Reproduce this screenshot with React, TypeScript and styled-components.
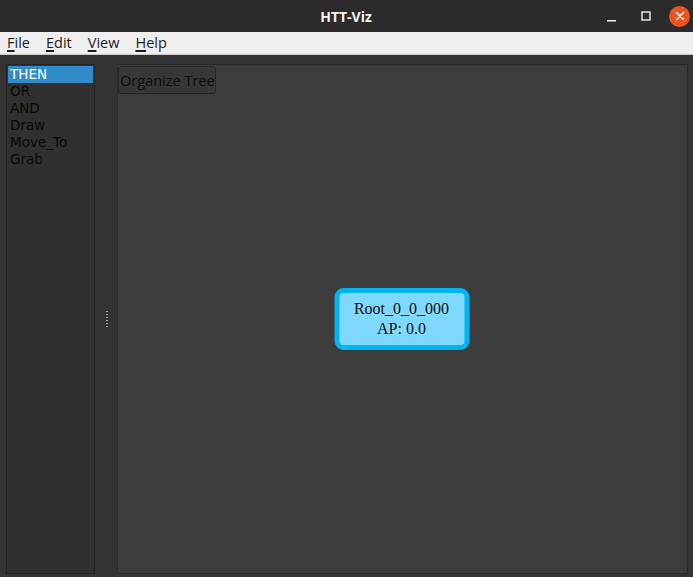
import React from "react";
import styled, { createGlobalStyle } from "styled-components";

const Global = createGlobalStyle`
  html, body { margin: 0; padding: 0; background: #333333; }
  #root { width: 693px; height: 577px; overflow: hidden; }
`;

const Window = styled.div`
  width: 693px;
  height: 577px;
  display: flex;
  flex-direction: column;
  background: #333333;
  font-family: "Open Sans", "DejaVu Sans", sans-serif;
`;

const TitleBar = styled.div`
  height: 32px;
  flex: none;
  background: #2c2a2a;
  display: flex;
  align-items: center;
  justify-content: center;
  position: relative;
`;

const Title = styled.div`
  color: #f2f2f2;
  font-weight: 700;
  font-size: 14px;
  margin-left: -1px;
`;

const WinControls = styled.div`
  position: absolute;
  right: 3px;
  top: 0;
  height: 32px;
  display: flex;
  align-items: center;
`;

const WinBtn = styled.div`
  width: 34px;
  height: 32px;
  display: flex;
  align-items: center;
  justify-content: center;
`;

const CloseBtn = styled.div`
  width: 21px;
  height: 21px;
  border-radius: 50%;
  background: #e95420;
  display: flex;
  align-items: center;
  justify-content: center;
  margin-left: 6px;
`;

const MenuBar = styled.div`
  height: 22px;
  flex: none;
  background: #efefef;
  border-bottom: 1px solid #c8c8c8;
  display: flex;
  align-items: center;
  padding-left: 7px;
`;

const MenuItem = styled.div`
  font-size: 14.5px;
  color: #1c1c1c;
  margin-right: 16px;
  line-height: 20px;
  u { text-decoration-thickness: 2px; text-underline-offset: 2px; }
`;

const Main = styled.div`
  flex: 1;
  display: flex;
  padding: 9px 5px 3px 6px;
  min-height: 0;
`;

const ListPanel = styled.div`
  width: 85px;
  flex: none;
  background: #303030;
  border: 1px solid #242424;
  padding: 1px;
  display: flex;
  flex-direction: column;
`;

const ListItem = styled.div<{ $selected?: boolean }>`
  height: 17px;
  line-height: 17px;
  font-family: "DejaVu Sans", sans-serif;
  font-size: 13.5px;
  padding-left: 2px;
  color: ${(p) => (p.$selected ? "#ffffff" : "#080808")};
  background: ${(p) => (p.$selected ? "#308cc6" : "transparent")};
`;

const Splitter = styled.div`
  width: 22px;
  flex: none;
  display: flex;
  align-items: center;
  justify-content: center;
`;

const Grip = styled.div`
  width: 2px;
  height: 16px;
  margin-left: 1px;
  background: repeating-linear-gradient(
    to bottom,
    #a0a0a0 0px,
    #a0a0a0 1px,
    transparent 1px,
    transparent 3px
  );
`;

const Canvas = styled.div`
  flex: 1;
  position: relative;
  background: #3c3c3c;
  border: 1px solid #2a2a2a;
  padding: 1px 0 0 0;
`;

const ToolButton = styled.button`
  height: 28px;
  padding: 0 1px;
  width: 98px;
  background: #373737;
  border: 1px solid #262626;
  border-radius: 3px;
  color: #0c0c0c;
  font-family: "Open Sans", "DejaVu Sans", sans-serif;
  font-size: 14.5px;
  white-space: nowrap;
  margin: 0;
`;

const Node = styled.div`
  position: absolute;
  left: 50%;
  top: 50%;
  transform: translate(-50%, -50%);
  width: 125px;
  height: 52px;
  background: #7fd9ff;
  border: 5px solid #00b4ef;
  border-radius: 9px;
  display: flex;
  flex-direction: column;
  align-items: center;
  justify-content: center;
  font-family: "Liberation Serif", "Times New Roman", serif;
  font-size: 16px;
  line-height: 20px;
  color: #111111;
  margin-left: -1px;
`;

const items = ["THEN", "OR", "AND", "Draw", "Move_To", "Grab"];

export default function App() {
  return (
    <>
      <Global />
      <Window>
        <TitleBar>
          <Title>HTT-Viz</Title>
          <WinControls>
            <WinBtn>
              <svg width="12" height="12" viewBox="0 0 12 12">
                <rect x="1" y="10" width="9" height="1.5" fill="#f2f2f2" />
              </svg>
            </WinBtn>
            <WinBtn>
              <svg width="12" height="12" viewBox="0 0 12 12">
                <rect x="2" y="2" width="8" height="8" fill="none" stroke="#f2f2f2" strokeWidth="1.4" />
              </svg>
            </WinBtn>
            <CloseBtn>
              <svg width="10" height="10" viewBox="0 0 10 10">
                <path d="M1.5 1.5 L8.5 8.5 M8.5 1.5 L1.5 8.5" stroke="#ffffff" strokeWidth="1.5" strokeLinecap="round" />
              </svg>
            </CloseBtn>
          </WinControls>
        </TitleBar>
        <MenuBar>
          <MenuItem><u>F</u>ile</MenuItem>
          <MenuItem><u>E</u>dit</MenuItem>
          <MenuItem><u>V</u>iew</MenuItem>
          <MenuItem><u>H</u>elp</MenuItem>
        </MenuBar>
        <Main>
          <ListPanel>
            {items.map((it, i) => (
              <ListItem key={it} $selected={i === 0}>{it}</ListItem>
            ))}
          </ListPanel>
          <Splitter>
            <Grip />
          </Splitter>
          <Canvas>
            <ToolButton>Organize Tree</ToolButton>
            <Node>
              <div>Root_0_0_000</div>
              <div>AP: 0.0</div>
            </Node>
          </Canvas>
        </Main>
      </Window>
    </>
  );
}
